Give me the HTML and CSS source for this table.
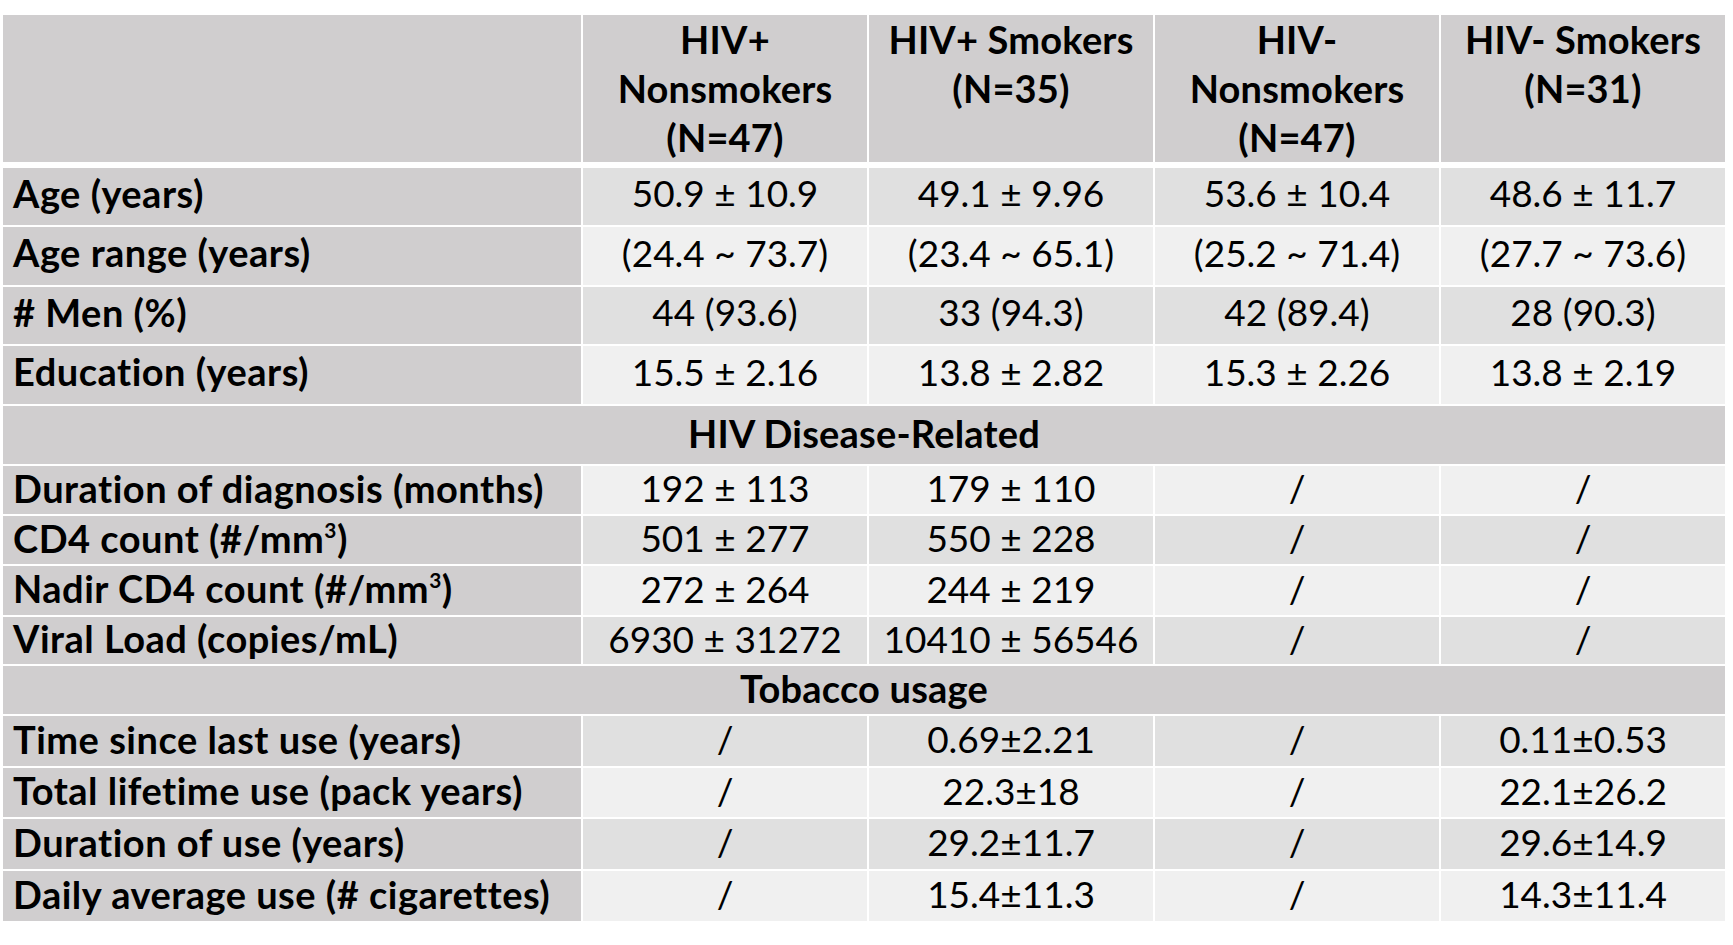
FILE: index.html
```html
<!DOCTYPE html>
<html lang="en">
<head>
<meta charset="utf-8">
<title>Participant characteristics</title>
<link rel="stylesheet" href="styles.css">
</head>
<body>
<table class="demo">
  <colgroup>
    <col class="c-label">
    <col class="c-grp">
    <col class="c-grp">
    <col class="c-grp">
    <col class="c-grp">
  </colgroup>
  <thead>
    <tr class="head">
      <th class="corner"></th>
      <th>HIV+<br>Nonsmokers<br>(N=47)</th>
      <th>HIV+ Smokers<br>(N=35)</th>
      <th>HIV-<br>Nonsmokers<br>(N=47)</th>
      <th>HIV- Smokers<br>(N=31)</th>
    </tr>
  </thead>
  <tbody>
    <tr class="r-a"><th>Age (years)</th><td>50.9 ± 10.9</td><td>49.1 ± 9.96</td><td>53.6 ± 10.4</td><td>48.6 ± 11.7</td></tr>
    <tr class="r-b"><th>Age range (years)</th><td>(24.4 ~ 73.7)</td><td>(23.4 ~ 65.1)</td><td>(25.2 ~ 71.4)</td><td>(27.7 ~ 73.6)</td></tr>
    <tr class="r-a"><th># Men (%)</th><td>44 (93.6)</td><td>33 (94.3)</td><td>42 (89.4)</td><td>28 (90.3)</td></tr>
    <tr class="r-b"><th>Education (years)</th><td>15.5 ± 2.16</td><td>13.8 ± 2.82</td><td>15.3 ± 2.26</td><td>13.8 ± 2.19</td></tr>
    <tr class="section s-1"><th colspan="5">HIV Disease-Related</th></tr>
    <tr class="r-c"><th>Duration of diagnosis (months)</th><td>192 ± 113</td><td>179 ± 110</td><td>/</td><td>/</td></tr>
    <tr class="r-c"><th>CD4 count (#/mm<sup>3</sup>)</th><td>501 ± 277</td><td>550 ± 228</td><td>/</td><td>/</td></tr>
    <tr class="r-c2"><th>Nadir CD4 count (#/mm<sup>3</sup>)</th><td>272 ± 264</td><td>244 ± 219</td><td>/</td><td>/</td></tr>
    <tr class="r-c3"><th>Viral Load (copies/mL)</th><td>6930 ± 31272</td><td>10410 ± 56546</td><td>/</td><td>/</td></tr>
    <tr class="section s-2"><th colspan="5">Tobacco usage</th></tr>
    <tr class="r-d"><th>Time since last use (years)</th><td>/</td><td>0.69±2.21</td><td>/</td><td>0.11±0.53</td></tr>
    <tr class="r-d2"><th>Total lifetime use (pack years)</th><td>/</td><td>22.3±18</td><td>/</td><td>22.1±26.2</td></tr>
    <tr class="r-d"><th>Duration of use (years)</th><td>/</td><td>29.2±11.7</td><td>/</td><td>29.6±14.9</td></tr>
    <tr class="r-d"><th>Daily average use (# cigarettes)</th><td>/</td><td>15.4±11.3</td><td>/</td><td>14.3±11.4</td></tr>
  </tbody>
</table>
</body>
</html>
```

FILE: styles.css
```css
html, body {
  margin: 0;
  padding: 0;
  background: #ffffff;
}

body {
  font-family: Lato, "Open Sans", sans-serif;
  color: #000000;
}

.demo {
  border-collapse: separate;
  border-spacing: 2px;
  margin: 13px 0 0 1px;
  table-layout: fixed;
  width: 1726px;
  font-size: 37px;
}

.c-label { width: 578px; }
.c-grp { width: 284px; }

.demo th,
.demo td {
  padding: 0;
  line-height: 1.1;
  vertical-align: middle;
  white-space: nowrap;
}

.demo th {
  font-size: 38px;
  font-weight: 700;
  letter-spacing: 0.5px;
  background: #d0cecf;
}

.demo .head th {
  height: 146px;
  text-align: center;
  vertical-align: top;
  line-height: 49px;
  padding-top: 0;
  letter-spacing: 0.2px;
  border-bottom: 4px solid #ffffff;
}

.demo tbody th {
  text-align: left;
  padding-left: 10px;
  padding-bottom: 3px;
}

.demo tbody td {
  text-align: center;
  font-weight: 400;
  padding-bottom: 3px;
}

.demo .r-a th,
.demo .r-a td,
.demo .r-b th,
.demo .r-b td {
  padding-bottom: 6px;
}

.demo tbody tr:nth-child(odd) td { background: #e0e0e0; }
.demo tbody tr:nth-child(even) td { background: #f0f0f0; }

.demo .section th {
  text-align: center;
  padding-left: 0;
  letter-spacing: 0.2px;
}

.r-a { height: 57px; }
.r-b { height: 58px; }
.s-1 { height: 58px; }
.r-c { height: 48px; }
.r-c2 { height: 49px; }
.r-c3 { height: 47px; }
.s-2 { height: 48px; }
.r-d { height: 50px; }
.r-d2 { height: 49px; }

sup {
  font-size: 0.55em;
  line-height: 0;
  vertical-align: 0.7em;
}
```
